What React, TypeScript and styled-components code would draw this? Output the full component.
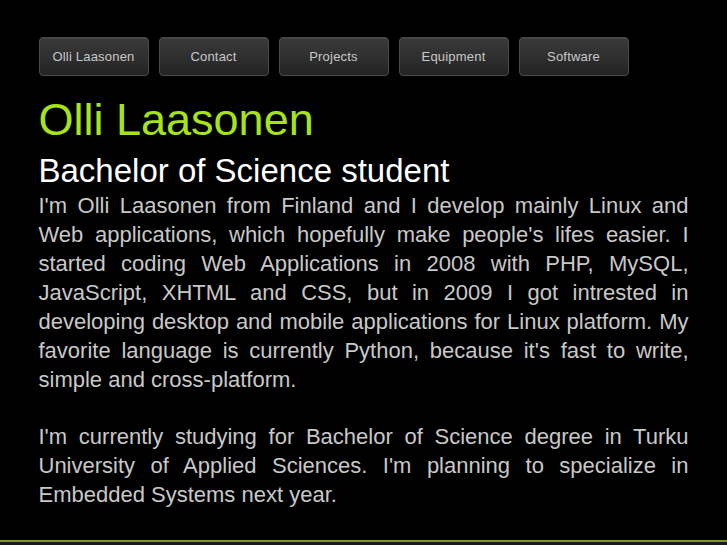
import React from "react";
import styled, { createGlobalStyle } from "styled-components";

const Global = createGlobalStyle`
  html, body { margin: 0; padding: 0; background: #000; }
  body { font-family: "Liberation Sans", Arial, sans-serif; overflow: hidden; }
`;

const Page = styled.div`
  width: 650px;
  margin: 0 auto;
  padding-top: 37px;
`;

const Nav = styled.nav`
  display: flex;
  gap: 10px;
`;

const NavButton = styled.a`
  display: flex;
  align-items: center;
  justify-content: center;
  width: 110px;
  height: 39px;
  box-sizing: border-box;
  border: 1px solid #4a4a4a;
  border-radius: 4px;
  background: linear-gradient(#3a3a3a, #242424);
  color: #c8c8c8;
  font-size: 13px;
  letter-spacing: 0.2px;
  text-decoration: none;
  box-shadow: inset 0 1px 0 rgba(255,255,255,0.06);
`;

const Title = styled.h1`
  margin: 19px 0 0;
  font-size: 45px;
  line-height: 50px;
  font-weight: normal;
  color: #a6e31a;
`;

const Subtitle = styled.h2`
  margin: 8px 0 0;
  font-size: 33px;
  line-height: 36px;
  font-weight: normal;
  color: #fff;
`;

const Para = styled.p`
  margin: 2px 0 0;
  font-size: 22px;
  line-height: 29px;
  color: #c8c8c8;
  text-align: justify;
  & + & { margin-top: 28px; }
`;

const Footer = styled.footer`
  margin-top: 31px;
  height: 200px;
  border-top: 2px solid #7b9a1f;
  background: #1a1a1a;
`;

export default function App() {
  const items = ["Olli Laasonen", "Contact", "Projects", "Equipment", "Software"];
  return (
    <>
      <Global />
      <Page>
        <Nav>
          {items.map((t) => (
            <NavButton key={t} href="#">{t}</NavButton>
          ))}
        </Nav>
        <Title>Olli Laasonen</Title>
        <Subtitle>Bachelor of Science student</Subtitle>
        <Para>
          I'm Olli Laasonen from Finland and I develop mainly Linux and Web applications, which hopefully make people's lifes easier. I started coding Web Applications in 2008 with PHP, MySQL, JavaScript, XHTML and CSS, but in 2009 I got intrested in developing desktop and mobile applications for Linux platform. My favorite language is currently Python, because it's fast to write, simple and cross-platform.
        </Para>
        <Para>
          I'm currently studying for Bachelor of Science degree in Turku University of Applied Sciences. I'm planning to specialize in Embedded Systems next year.
        </Para>
      </Page>
      <Footer />
    </>
  );
}
